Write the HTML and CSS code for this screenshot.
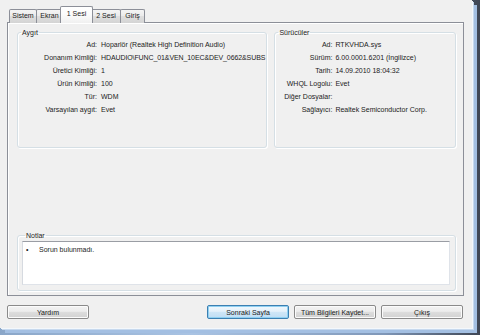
FILE: index.html
```html
<!DOCTYPE html>
<html lang="tr">
<head>
<meta charset="utf-8">
<title>DirectX Tanı Aracı</title>
<link rel="stylesheet" href="styles.css">
</head>
<body>
<div class="screen">
  <div class="dialog">
    <div class="tabs">
      <div class="tab w-sistem">Sistem</div>
      <div class="tab w-ekran">Ekran</div>
      <div class="tab active w-ses1">1 Sesi</div>
      <div class="tab w-ses2">2 Sesi</div>
      <div class="tab w-giris">Giriş</div>
    </div>
    <div class="panel">
      <div class="groups">
        <fieldset class="group device">
          <legend>Aygıt</legend>
          <div class="rows">
            <span class="lbl">Ad:</span><span class="val">Hoparlör (Realtek High Definition Audio)</span>
            <span class="lbl">Donanım Kimliği:</span><span class="val tight">HDAUDIO\FUNC_01&amp;VEN_10EC&amp;DEV_0662&amp;SUBS</span>
            <span class="lbl">Üretici Kimliği:</span><span class="val">1</span>
            <span class="lbl">Ürün Kimliği:</span><span class="val">100</span>
            <span class="lbl">Tür:</span><span class="val">WDM</span>
            <span class="lbl">Varsayılan aygıt:</span><span class="val">Evet</span>
          </div>
        </fieldset>
        <fieldset class="group drivers">
          <legend>Sürücüler</legend>
          <div class="rows">
            <span class="lbl">Ad:</span><span class="val">RTKVHDA.sys</span>
            <span class="lbl">Sürüm:</span><span class="val">6.00.0001.6201 (İngilizce)</span>
            <span class="lbl">Tarih:</span><span class="val">14.09.2010 18:04:32</span>
            <span class="lbl">WHQL Logolu:</span><span class="val">Evet</span>
            <span class="lbl">Diğer Dosyalar:</span><span class="val"></span>
            <span class="lbl">Sağlayıcı:</span><span class="val">Realtek Semiconductor Corp.</span>
          </div>
        </fieldset>
      </div>
      <fieldset class="group notes">
        <legend>Notlar</legend>
        <div class="notes-box">
          <div class="note"><span class="bullet">•</span><span>Sorun bulunmadı.</span></div>
        </div>
      </fieldset>
    </div>
    <div class="buttons">
      <button class="btn">Yardım</button>
      <div class="spacer"></div>
      <button class="btn focused">Sonraki Sayfa</button>
      <button class="btn">Tüm Bilgileri Kaydet...</button>
      <button class="btn">Çıkış</button>
    </div>
  </div>
</div>
</body>
</html>
```

FILE: styles.css
```css
html, body {
  margin: 0;
  padding: 0;
}

body {
  width: 480px;
  height: 335px;
  overflow: hidden;
  font-family: "Liberation Sans", Arial, sans-serif;
  font-size: 7px;
  color: #1b1b1b;
}

.screen {
  width: 480px;
  height: 335px;
  background: linear-gradient(to right, #8aa6c8 0%, #a9c3e3 40%, #7f97b8 80%, #3f4654 100%);
  position: relative;
}

.dialog {
  width: 472px;
  height: 328px;
  box-sizing: border-box;
  background: #f0f0f0;
  padding: 6px 9px 0 7px;
  display: flex;
  flex-direction: column;
  box-shadow: 1px 1px 0 #f4f8fc, 2px 2px 0 #c7d9ee, 5px 5px 0 #a3bfe2;
}

/* Tabs */
.tabs {
  display: flex;
  align-items: flex-end;
  height: 17px;
  padding-left: 2px;
  margin-bottom: -1px;
  position: relative;
  z-index: 1;
}

.tab {
  height: 14px;
  box-sizing: border-box;
  border: 1px solid #8c8f98;
  border-bottom: none;
  border-radius: 2px 2px 0 0;
  background: linear-gradient(#f4f4f4 0%, #ebebeb 45%, #dedede 50%, #d4d4d4 100%);
  margin-right: -1px;
  display: flex;
  align-items: center;
  justify-content: center;
  line-height: 8px;
  padding-bottom: 1px;
}

.tab.active {
  height: 17px;
  background: linear-gradient(#ffffff 0%, #fbfbfb 50%, #f0f0f0 100%);
  margin-left: -2px;
  margin-right: -2px;
  position: relative;
  z-index: 2;
  padding-bottom: 3px;
}

.w-sistem { width: 28px; }
.w-ekran { width: 27px; }
.w-ses1 { width: 33px; }
.w-ses2 { width: 30px; }
.w-giris { width: 25px; }

/* Panel */
.panel {
  width: 457px;
  height: 274px;
  box-sizing: border-box;
  border: 1px solid #8c8f98;
  box-shadow: inset 1px 1px 0 #ffffff;
  padding: 5px 7px 4px 9px;
  display: flex;
  flex-direction: column;
}

.groups {
  display: flex;
  gap: 7px;
  height: 120px;
}

.group {
  margin: 0;
  border: 1px solid #d5dfe5;
  border-radius: 3px;
  box-shadow: inset 1px 1px 0 #ffffff, 1px 1px 0 #ffffff;
  box-sizing: border-box;
  min-width: 0;
}

.group legend {
  padding: 0 1px;
  margin-left: 3px;
  font-size: 7px;
  line-height: 9px;
}

.device {
  width: 251px;
  padding: 1px 0 0 0;
}

.drivers {
  width: 182px;
  padding: 1px 0 0 0;
}

.rows {
  display: grid;
  grid-auto-rows: 13px;
  align-items: center;
  column-gap: 4px;
  white-space: nowrap;
  line-height: 10px;
}

.device .rows {
  grid-template-columns: 79px 1fr;
}

.drivers .rows {
  grid-template-columns: 57px 1fr;
  column-gap: 3px;
}

.lbl {
  text-align: right;
}

.val.tight {
  letter-spacing: -0.1px;
}

/* Notes */
.notes {
  margin-top: auto;
  height: 60px;
  padding: 1px 5px 3px 4px;
}

.notes-box {
  height: 44px;
  box-sizing: border-box;
  background: #ffffff;
  border: 1px solid #dfe3e9;
  border-top-color: #9a9da4;
  border-left-color: #d6dae0;
  padding: 3px 2px;
}

.note {
  display: flex;
  line-height: 9px;
}

.bullet {
  width: 13px;
  padding-left: 1px;
}

/* Buttons */
.buttons {
  display: flex;
  margin-top: 9px;
  height: 14px;
  gap: 5px;
}

.spacer {
  flex: 1;
}

.btn {
  width: 82px;
  height: 14px;
  box-sizing: border-box;
  margin: 0;
  padding: 0;
  font-family: "Liberation Sans", Arial, sans-serif;
  font-size: 7px;
  color: #1b1b1b;
  border: 1px solid #8a8a8a;
  border-radius: 2px;
  background: linear-gradient(#f3f3f3 0%, #ececec 45%, #dddddd 50%, #d2d2d2 100%);
  box-shadow: inset 0 0 0 1px #fbfbfb;
}

.btn.focused {
  border-color: #3c7fb1;
  background: linear-gradient(#f1f8fd 0%, #e3f0fa 45%, #cfe6f7 50%, #c0ddf4 100%);
  box-shadow: inset 0 0 0 1px #8fd0f2;
}
```
